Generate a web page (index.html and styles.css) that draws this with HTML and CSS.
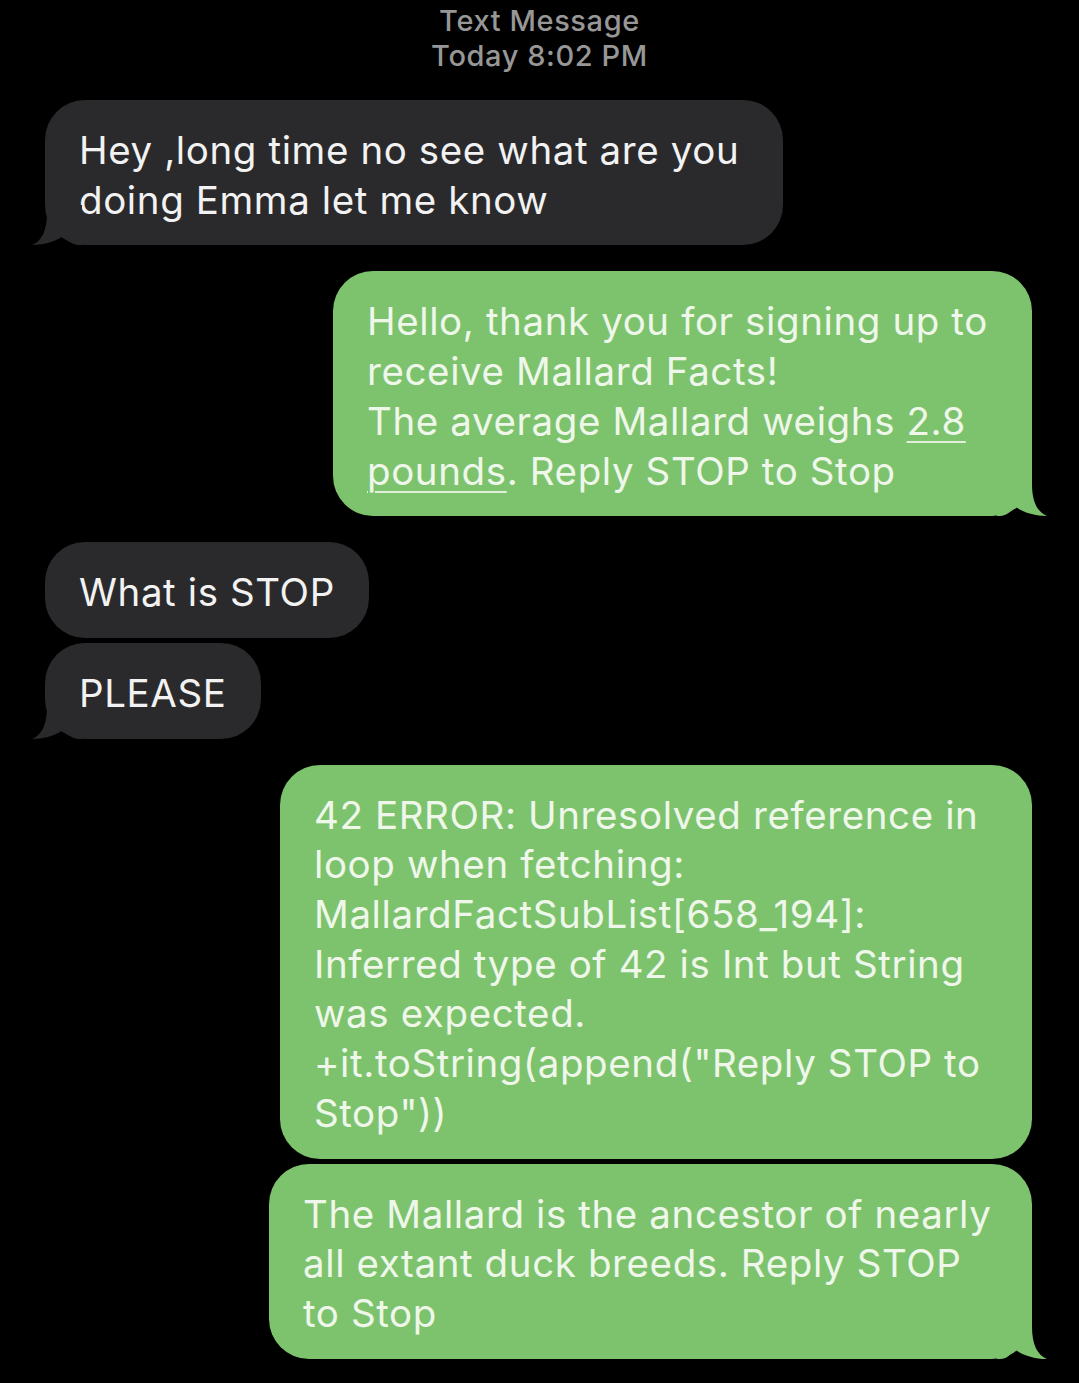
FILE: index.html
```html
<!DOCTYPE html>
<html lang="en">
<head>
<meta charset="utf-8">
<title>Text Message</title>
<link rel="stylesheet" href="styles.css">
</head>
<body>
<main class="thread">
  <header class="thread-head">
    <div class="thread-title">Text Message</div>
    <div class="thread-time">Today 8:02 PM</div>
  </header>

  <div class="bubble bubble--in bubble--hey has-tail">
    Hey ,long time no see what are you<br>doing Emma let me know
    <svg class="tail" viewBox="0 0 50 40" aria-hidden="true"><path d="M0 0 L35 0 L35 8 C35 25 40 36 50 40 C38 40 24 36 18 30 C14 35 10 40 3 40 L0 40 Z"/></svg>
  </div>

  <div class="bubble bubble--out bubble--hello has-tail">
    Hello, thank you for signing up to<br>receive Mallard Facts!<br>The average Mallard weighs <span class="link">2.8<br>pounds</span>. Reply STOP to Stop
    <svg class="tail" viewBox="0 0 50 40" aria-hidden="true"><path d="M0 0 L35 0 L35 8 C35 25 40 36 50 40 C38 40 24 36 18 30 C14 35 10 40 3 40 L0 40 Z"/></svg>
  </div>

  <div class="bubble bubble--in group-first">What is STOP</div>
  <div class="bubble bubble--in group-next has-tail">
    PLEASE
    <svg class="tail" viewBox="0 0 50 40" aria-hidden="true"><path d="M0 0 L35 0 L35 8 C35 25 40 36 50 40 C38 40 24 36 18 30 C14 35 10 40 3 40 L0 40 Z"/></svg>
  </div>

  <div class="bubble bubble--out bubble--error group-first">
    42 ERROR: Unresolved reference in<br>loop when fetching:<br>MallardFactSubList[658_194]:<br>Inferred type of 42 is Int but String<br>was expected.<br>+it.toString(append("Reply STOP to<br>Stop"))
  </div>
  <div class="bubble bubble--out bubble--ancestor group-next has-tail">
    The Mallard is the ancestor of nearly<br>all extant duck breeds. Reply STOP<br>to Stop
    <svg class="tail" viewBox="0 0 50 40" aria-hidden="true"><path d="M0 0 L35 0 L35 8 C35 25 40 36 50 40 C38 40 24 36 18 30 C14 35 10 40 3 40 L0 40 Z"/></svg>
  </div>
</main>
</body>
</html>
```

FILE: styles.css
```css
html, body {
  margin: 0;
  padding: 0;
  background: #000;
}

body {
  font-family: Inter, "Noto Sans", "Liberation Sans", sans-serif;
  -webkit-font-smoothing: antialiased;
}

.thread {
  display: flex;
  flex-direction: column;
  padding: 3px 47px 0 45px;
  height: 1383px;
  box-sizing: border-box;
  overflow: hidden;
}

.thread-head {
  align-self: center;
  text-align: center;
  color: #979797;
  font-size: 29px;
  letter-spacing: 0.6px;
  line-height: 35px;
  margin-bottom: 27px;
  margin-left: 2px;
}

.thread-title {
  font-weight: 500;
}

.thread-time {
  font-weight: 450;
}

.bubble {
  position: relative;
  box-sizing: border-box;
  padding: 26px 34px 20px 34px;
  border-radius: 40px;
  font-size: 38.5px;
  letter-spacing: 0.6px;
  line-height: 49.7px;
  white-space: nowrap;
  margin-top: 26px;
}

.bubble--in {
  align-self: flex-start;
  background: #2a2a2c;
  color: #f2f2f2;
}

.bubble--out {
  align-self: flex-end;
  background: #7dc36e;
  color: #eff7ea;
}

.bubble--hey { margin-top: 0; width: 738px; }
.bubble--hello { width: 699px; }
.bubble--error { width: 752px; }
.bubble--ancestor { width: 763px; }

.group-next { margin-top: 5px; }

.link {
  text-decoration: underline;
  text-decoration-thickness: 2px;
  text-underline-offset: 6px;
  text-decoration-color: rgba(241, 248, 236, 0.85);
}

.tail {
  position: absolute;
  bottom: 0;
  width: 50px;
  height: 40px;
  display: block;
}

.bubble--out .tail {
  right: -15px;
  fill: #7dc36e;
}

.bubble--in .tail {
  left: -13px;
  fill: #2a2a2c;
  transform: scaleX(-1);
}
```
